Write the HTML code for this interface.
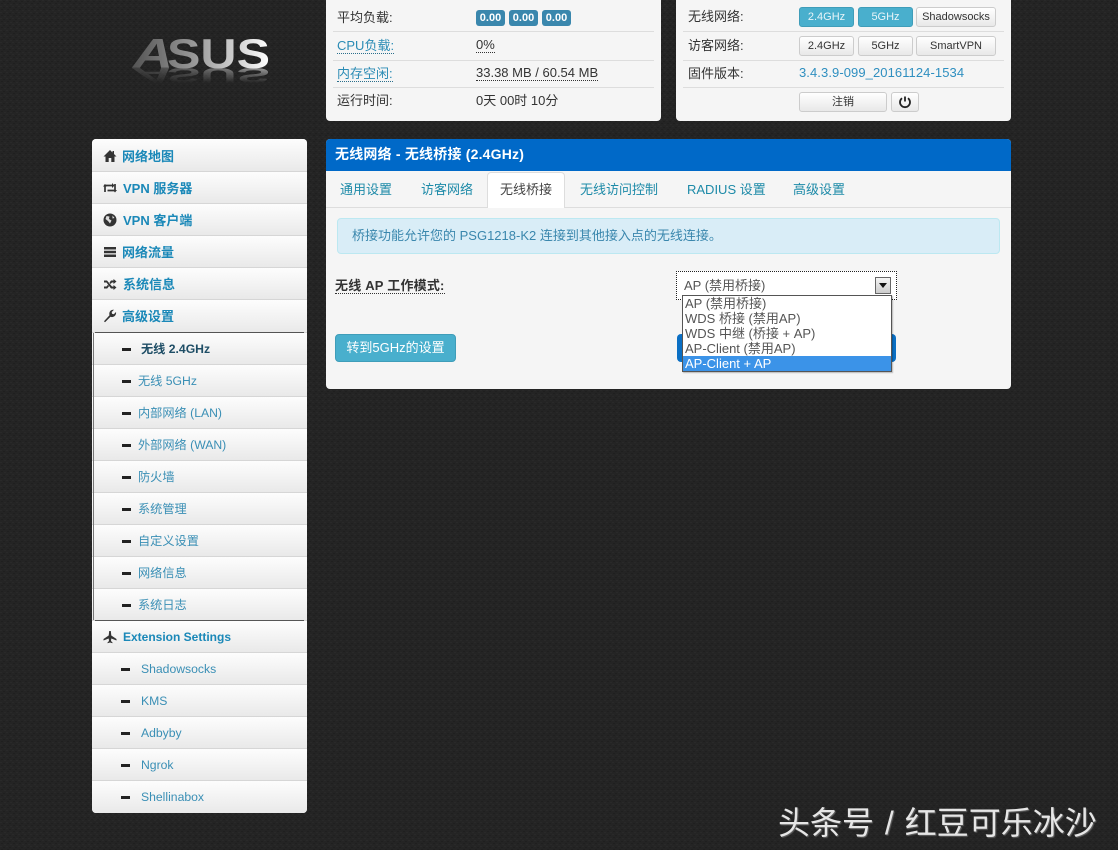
<!DOCTYPE html>
<html lang="zh">
<head>
<meta charset="utf-8">
<title>无线桥接</title>
<style>
html,body{margin:0;padding:0;width:1118px;height:850px;overflow:hidden}
body{position:relative;background-color:#242424;font-family:"Liberation Sans","Noto Sans CJK SC",sans-serif;font-size:13px;color:#333}
.a{position:absolute;white-space:nowrap}
.card{position:absolute;background:#f5f5f5;border-radius:0 0 4px 4px}
.ln{position:absolute;height:1px;background:#ddd}
.lk{color:#2b8cb5}
.dot{border-bottom:1px dotted #333;padding-bottom:0}
.badge{position:absolute;top:10px;width:29px;height:16px;line-height:16px;background:#3a87ad;color:#fff;font-size:11px;font-weight:bold;text-align:center;border-radius:3px}
.btn{position:absolute;box-sizing:border-box;height:20px;line-height:19px;text-align:center;font-size:11px;color:#333;background:linear-gradient(#fff,#e8e8e8);border:1px solid #ccc;border-radius:3px;white-space:nowrap}
.on{background:#49afcd;border-color:#3f9db9;color:#e8f4f8}
#side{position:absolute;left:92px;top:139px;width:215px;height:674px;background:#fff;border-radius:4px;overflow:hidden}
.it{position:absolute;left:0;width:215px;height:32px;box-sizing:border-box;background:linear-gradient(#fdfdfd,#e9e9e9);border-bottom:1px solid #d6d6d6}
.it b,.it span{position:absolute;top:0;line-height:33px;white-space:nowrap}
.it b{left:30px;color:#1a88b8;font-size:13px}
.it span{left:46px;color:#3a8fb5;font-size:12.2px}
.it i{position:absolute;left:30px;top:15px;width:9px;height:3px;background:#222}
.it svg{position:absolute;left:11px;top:9px;width:14px;height:14px;fill:#333}
.tab{position:absolute;top:179px;font-size:13px;color:#1d8aa8;white-space:nowrap}
</style>
</head>
<body>

<svg class="a" style="left:0;top:0" width="1118" height="850">
<defs><pattern id="bgp" width="6" height="6" patternUnits="userSpaceOnUse">
<rect width="6" height="6" fill="#242424"/>
<rect x="0" y="0" width="2" height="1" fill="#292929"/><rect x="3" y="1" width="2" height="1" fill="#1f1f1f"/>
<rect x="1" y="3" width="2" height="1" fill="#1f1f1f"/><rect x="4" y="4" width="2" height="1" fill="#292929"/>
</pattern></defs>
<rect width="1118" height="850" fill="url(#bgp)"/>
</svg>

<svg class="a" style="left:125px;top:30px" width="155" height="60" viewBox="0 0 155 60">
<defs>
<linearGradient id="g" gradientUnits="userSpaceOnUse" x1="8" x2="145" y1="0" y2="0"><stop offset="0" stop-color="#555"/><stop offset=".45" stop-color="#999"/><stop offset="1" stop-color="#fff"/></linearGradient>
<linearGradient id="r" x1="0" x2="0" y1="0" y2="1"><stop offset="0" stop-color="#fff"/><stop offset="1" stop-color="#000"/></linearGradient>
<mask id="fade"><rect x="0" y="38" width="155" height="15" fill="url(#r)"/></mask>
</defs>
<text x="8" y="38" font-family="Liberation Sans" font-weight="bold" font-style="italic" font-size="42" textLength="40" lengthAdjust="spacingAndGlyphs" fill="url(#g)">A</text>
<text x="42" y="38" font-family="Liberation Sans" font-weight="bold" font-size="42" textLength="103" lengthAdjust="spacingAndGlyphs" fill="url(#g)">SUS</text>
<g mask="url(#fade)">
<g transform="translate(0,57) scale(1,-.5)" opacity=".55">
<text x="8" y="38" font-family="Liberation Sans" font-weight="bold" font-style="italic" font-size="42" textLength="40" lengthAdjust="spacingAndGlyphs" fill="url(#g)">A</text>
<text x="42" y="38" font-family="Liberation Sans" font-weight="bold" font-size="42" textLength="103" lengthAdjust="spacingAndGlyphs" fill="url(#g)">SUS</text>
</g>
</g>
</svg>

<!-- top left card -->
<div class="card" style="left:326px;top:0;width:335px;height:121px">
  <div class="a" style="left:11px;top:9px;margin-top:-2px">平均负载:</div>
  <div class="badge" style="left:150px">0.00</div>
  <div class="badge" style="left:183px">0.00</div>
  <div class="badge" style="left:216px">0.00</div>
  <div class="ln" style="left:7px;top:31px;width:321px"></div>
  <div class="a lk" style="left:11px;top:35px"><span class="dot" style="border-color:#2b6f8c">CPU负载:</span></div>
  <div class="a" style="left:150px;top:37px"><span class="dot">0%</span></div>
  <div class="ln" style="left:7px;top:60px;width:321px"></div>
  <div class="a lk" style="left:11px;top:63px"><span class="dot" style="border-color:#2b6f8c">内存空闲:</span></div>
  <div class="a" style="left:150px;top:65px"><span class="dot">33.38 MB / 60.54 MB</span></div>
  <div class="ln" style="left:7px;top:87px;width:321px"></div>
  <div class="a" style="left:11px;top:90px">运行时间:</div>
  <div class="a" style="left:150px;top:90px">0天 00时 10分</div>
</div>

<!-- top right card -->
<div class="card" style="left:676px;top:0;width:335px;height:121px">
  <div class="a" style="left:12px;top:6px">无线网络:</div>
  <div class="btn on" style="left:123px;top:7px;width:55px">2.4GHz</div>
  <div class="btn on" style="left:182px;top:7px;width:55px">5GHz</div>
  <div class="btn" style="left:240px;top:7px;width:80px">Shadowsocks</div>
  <div class="ln" style="left:7px;top:31px;width:321px"></div>
  <div class="a" style="left:12px;top:35px">访客网络:</div>
  <div class="btn" style="left:123px;top:36px;width:55px">2.4GHz</div>
  <div class="btn" style="left:182px;top:36px;width:55px">5GHz</div>
  <div class="btn" style="left:240px;top:36px;width:80px">SmartVPN</div>
  <div class="ln" style="left:7px;top:60px;width:321px"></div>
  <div class="a" style="left:12px;top:63px">固件版本:</div>
  <div class="a" style="left:123px;top:65px;color:#2f8fc0;font-size:13px;letter-spacing:.08px">3.4.3.9-099_20161124-1534</div>
  <div class="ln" style="left:7px;top:87px;width:321px"></div>
  <div class="btn" style="left:123px;top:92px;width:88px">注销</div>
  <div class="btn" style="left:215px;top:92px;width:28px"><svg width="14" height="14" viewBox="0 0 14 14" style="margin-top:2px"><path d="M4 3.2a5 5 0 1 0 6 0" fill="none" stroke="#222" stroke-width="1.8"/><path d="M7 1.5v5" stroke="#222" stroke-width="1.8"/></svg></div>
</div>

<!-- sidebar -->
<div id="side">
  <div class="it" style="top:0;height:33px"><svg style="top:10px" viewBox="0 0 14 14"><path d="M7 1L0.5 7.500H2.500V13H5.700V9H8.300V13H11.500V7.500H13.500L11 5V2H9.500V3.500z"/></svg><b style="line-height:35px">网络地图</b></div>
  <div class="it" style="top:33px"><svg viewBox="0 0 14 14"><path d="M2 11V4.500H10M12 3V9.500H4.500" fill="none" stroke="#333" stroke-width="1.700"/><path d="M0 5.500L2 3L4 5.500zM9 2L11.500 4.500L9 7zM10 9L12 11.500L14 9z"/></svg><b style="left:31px">VPN 服务器</b></div>
  <div class="it" style="top:65px"><svg viewBox="0 0 14 14"><circle cx="7" cy="7" r="6.500"/><path d="M3.500 3L6.500 3.500L6 6L8.500 7.500L7 10.500L5 8L2.500 6zM9.500 2.500L11.500 5L9.500 5.500z" fill="#ddd"/></svg><b style="left:31px">VPN 客户端</b></div>
  <div class="it" style="top:97px"><svg viewBox="0 0 14 14"><path d="M1 2H13V4.500H1zM1 5.800H13V8.200H1zM1 9.500H13V12H1z"/></svg><b>网络流量</b></div>
  <div class="it" style="top:129px"><svg viewBox="0 0 14 14"><path d="M1 3.500H4L9 9.500H10.500V8L13.500 10.500L10.500 13V11.500H8L3.500 5.500H1zM1 9.500H3.500L5 7.800L6 9.200L4.200 11.500H1zM8 3.500H10.500V2L13.500 4.500L10.500 7V5.500H9L7.500 7L6.500 5.600z"/></svg><b style="left:31px">系统信息</b></div>
  <div class="it" style="top:161px;height:33px"><svg viewBox="0 0 14 14"><path d="M1 12.200L2 13.200L7.500 7.800C9.500 8.500 11.500 7.800 12.500 6C13.100 5 13.200 4 13 3L10.800 5.200L9 4.800L8.700 3L11 .8C9.800 .5 8.500 .9 7.500 1.800C6.300 3 6 4.800 6.500 6.300z"/></svg><b>高级设置</b></div>

  <div class="it" style="top:194px"><i></i><span style="left:49px;color:#1f4e66;font-weight:bold">无线 2.4GHz</span></div>
  <div class="it" style="top:226px"><i></i><span>无线 5GHz</span></div>
  <div class="it" style="top:258px"><i></i><span>内部网络 (LAN)</span></div>
  <div class="it" style="top:290px"><i></i><span>外部网络 (WAN)</span></div>
  <div class="it" style="top:322px"><i></i><span>防火墙</span></div>
  <div class="it" style="top:354px"><i></i><span>系统管理</span></div>
  <div class="it" style="top:386px"><i></i><span>自定义设置</span></div>
  <div class="it" style="top:418px"><i></i><span>网络信息</span></div>
  <div class="it" style="top:450px"><i></i><span>系统日志</span></div>
  <div class="a" style="left:1px;top:194px;width:1px;height:287px;background:#777"></div>
  <div class="a" style="left:3px;top:193px;width:209px;height:1px;background:#555"></div>
  <div class="a" style="left:3px;top:481px;width:209px;height:1px;background:#555"></div>

  <div class="it" style="top:482px"><svg viewBox="0 0 14 14"><path d="M6.200 1H7.800L8.300 5.500L13.500 9V10.500L8.300 8.500L8 11L9.500 12.500V13.300L7 12.500L4.500 13.300V12.500L6 11L5.700 8.500L.5 10.500V9L5.700 5.500z"/></svg><b style="left:31px;font-size:12px">Extension Settings</b></div>
  <div class="it" style="top:514px"><i style="left:29px"></i><span style="left:49px">Shadowsocks</span></div>
  <div class="it" style="top:546px"><i style="left:29px"></i><span style="left:49px">KMS</span></div>
  <div class="it" style="top:578px"><i style="left:29px"></i><span style="left:49px">Adbyby</span></div>
  <div class="it" style="top:610px"><i style="left:29px"></i><span style="left:49px">Ngrok</span></div>
  <div class="it" style="top:642px;border-bottom:0"><i style="left:29px"></i><span style="left:49px">Shellinabox</span></div>
</div>

<!-- main panel -->
<div class="a" style="left:326px;top:139px;width:685px;height:250px;background:#f5f5f5;border-radius:4px"></div>
<div class="a" style="left:326px;top:139px;width:685px;height:32px;background:#0069c8;border-radius:4px 4px 0 0"></div>
<div class="a" style="left:335px;top:146px;color:#fff;font-weight:bold;font-size:14px;line-height:17px;letter-spacing:.2px">无线网络 - 无线桥接 (2.4GHz)</div>
<div class="a" style="left:326px;top:207px;width:685px;height:1px;background:#ddd"></div>
<div class="a" style="left:487px;top:172px;width:78px;height:36px;background:#fff;border:1px solid #ddd;border-bottom:0;border-radius:4px 4px 0 0;box-sizing:border-box"></div>
<div class="tab" style="left:340px">通用设置</div>
<div class="tab" style="left:421px">访客网络</div>
<div class="tab" style="left:500px;color:#444">无线桥接</div>
<div class="tab" style="left:580px">无线访问控制</div>
<div class="tab" style="left:687px">RADIUS 设置</div>
<div class="tab" style="left:793px">高级设置</div>

<div class="a" style="left:337px;top:218px;width:661px;height:34px;background:#d9edf7;border:1px solid #bce8f1;border-radius:4px"></div>
<div class="a" style="left:352px;top:225px;color:#3a87ad">桥接功能允许您的 PSG1218-K2 连接到其他接入点的无线连接。</div>

<div class="a" style="left:335px;top:278px;font-weight:bold;color:#333;border-bottom:1px dotted #333;line-height:15px;height:15px;letter-spacing:.2px">无线 AP 工作模式:</div>

<div class="a" style="left:335px;top:334px;width:121px;height:28px;box-sizing:border-box;background:#49afcd;border:1px solid #3f9db9;border-radius:4px;color:#fff;text-align:center;line-height:25px">转到5GHz的设置</div>
<div class="a" style="left:677px;top:334px;width:219px;height:28px;background:#0a6fc4;border-radius:4px"></div>

<!-- select -->
<div class="a" style="left:676px;top:271px;width:221px;height:29px;box-sizing:border-box;border:1px dotted #222;background:#fff"></div>
<div class="a" style="left:684px;top:278px;color:#555;font-size:13px;line-height:16px">AP (禁用桥接)</div>
<div class="a" style="left:875px;top:277px;width:16px;height:17px;box-sizing:border-box;border:1px solid #666;background:linear-gradient(#f4f4f4,#ccc)"><div style="position:absolute;left:3px;top:5px;width:0;height:0;border:4px solid transparent;border-top:5px solid #111;border-bottom:0"></div></div>
<div class="a" style="left:682px;top:295px;width:210px;height:77px;box-sizing:border-box;border:1px solid #555;background:#fff;color:#555;font-size:13px;line-height:15px;box-shadow:1px 1px 1px rgba(0,0,0,.25)">
  <div style="padding-left:2px;height:15px">AP (禁用桥接)</div>
  <div style="padding-left:2px;height:15px">WDS 桥接 (禁用AP)</div>
  <div style="padding-left:2px;height:15px">WDS 中继 (桥接 + AP)</div>
  <div style="padding-left:2px;height:15px">AP-Client (禁用AP)</div>
  <div style="padding-left:2px;height:15px;background:#3b93e8;color:#fff">AP-Client + AP</div>
</div>

<!-- watermark -->
<div class="a" style="left:778px;top:802px;font-size:32px;line-height:38px;color:#e6e6e6;text-shadow:1px 1px 1px #666;margin-top:2px">头条号 <span style="margin:0 2px">/</span> 红豆可乐冰沙</div>

</body>
</html>
